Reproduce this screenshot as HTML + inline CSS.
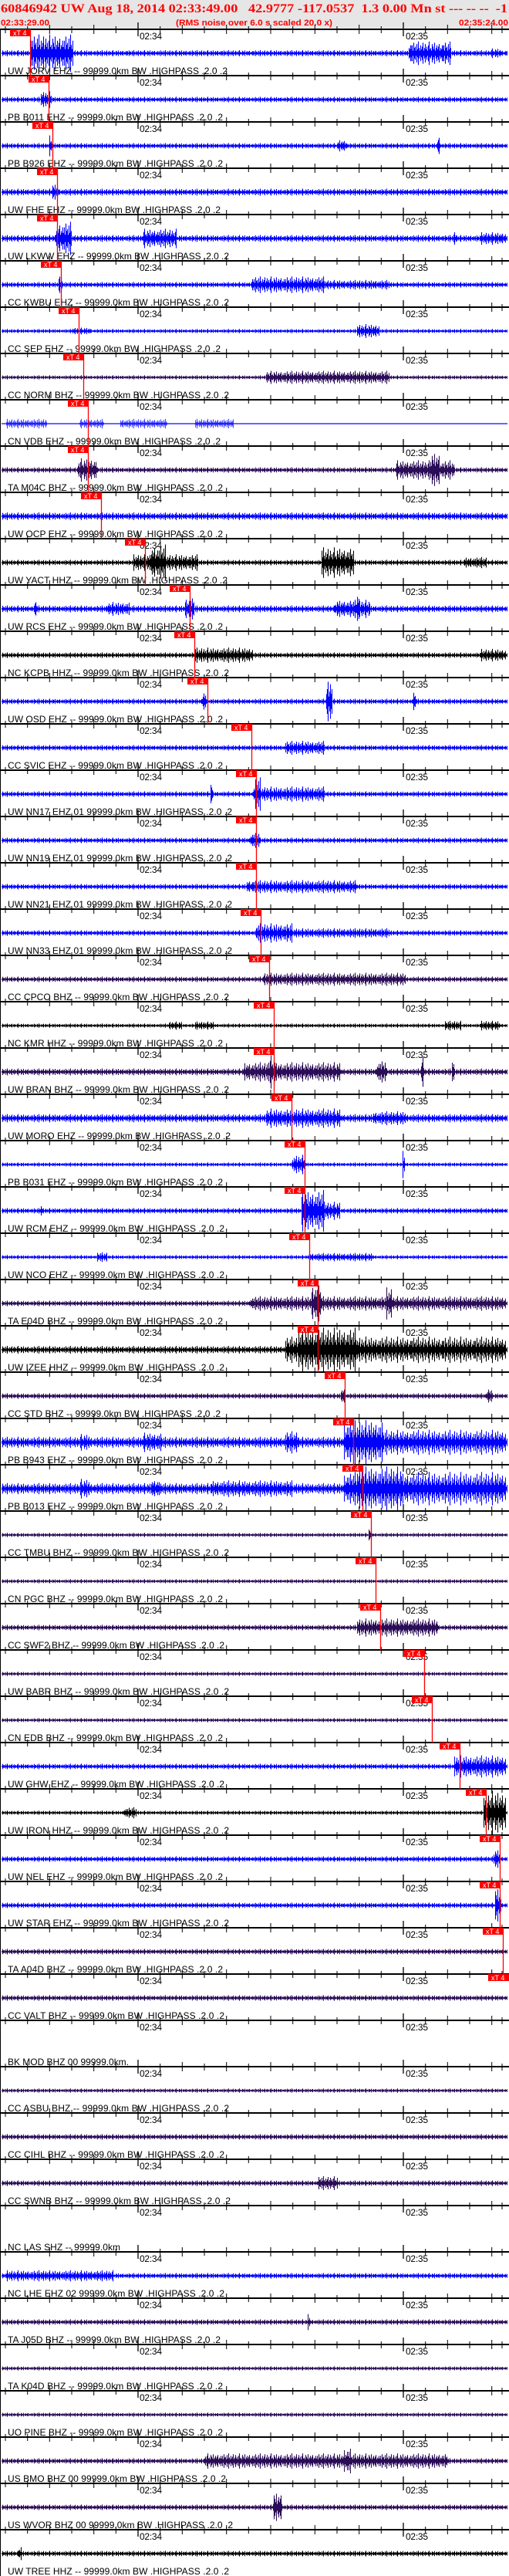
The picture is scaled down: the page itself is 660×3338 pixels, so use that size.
<!DOCTYPE html>
<html><head><meta charset="utf-8"><style>html,body{margin:0;padding:0;background:#fff}svg{display:block}</style></head>
<body>
<svg xmlns="http://www.w3.org/2000/svg" xmlns:xlink="http://www.w3.org/1999/xlink" width="660" height="3338" viewBox="0 0 660 3338" font-family="'Liberation Sans', sans-serif">
<defs>
<path id="tile" d="M0.5 7V13M1.5 4V16M2.5 8V12M3.5 2V18M4.5 6V14M5.5 5V15M6.5 8V12M7.5 3V17M8.5 7V13M9.5 1V19M10.5 6V14M11.5 8V12M12.5 4V16M13.5 7V13M14.5 5V15M15.5 2V18M16.5 8V12M17.5 6V14M18.5 3V17M19.5 7V13M20.5 5V15M21.5 8V12M22.5 4V16M23.5 1V19M24.5 7V13M25.5 6V14M26.5 8V12M27.5 3V17M28.5 5V15M29.5 7V13M30.5 2V18M31.5 8V12M32.5 6V14M33.5 4V16M34.5 7V13M35.5 5V15M36.5 3V17M37.5 8V12M38.5 6V14M39.5 7V13M40.5 4V16"/>
<pattern id="B" width="41" height="20" y="-10" patternUnits="userSpaceOnUse"><use xlink:href="#tile" stroke="#0000ff" stroke-width="1.1"/><path d="M0 10H41" stroke="#0000ff" stroke-width="3"/></pattern>
<pattern id="P" width="41" height="20" y="-10" patternUnits="userSpaceOnUse"><use xlink:href="#tile" stroke="#2a0c57" stroke-width="1.1"/><path d="M0 10H41" stroke="#2a0c57" stroke-width="3"/></pattern>
<pattern id="K" width="41" height="20" y="-10" patternUnits="userSpaceOnUse"><use xlink:href="#tile" stroke="#000000" stroke-width="1.1"/><path d="M0 10H41" stroke="#000" stroke-width="3"/></pattern>
<g id="ax">
<path d="M0 0H660" stroke="#000" stroke-width="2"/>
<path d="M7 -4V5M35.7 -4V5M64.3 -6V6M93 -4V5M121.7 -6V6M150.3 -4V5M207.7 -4V5M236.3 -6V6M265 -4V5M293.7 -6V6M322.3 -4V5M351 -6V6M379.7 -4V5M408.3 -6V6M437 -4V5M465.7 -6V6M494.3 -4V5M551.7 -4V5M580.3 -6V6M609 -4V5M637.7 -6V6M651 -4V5" stroke="#000" stroke-width="1"/>
<path d="M179 -9V9M523 -9V9" stroke="#000" stroke-width="1.3"/>
</g>
</defs>

<rect x="0" y="0" width="660" height="37" fill="#e6e6e6"/>
<text x="1" y="16" font-family="'Liberation Serif', serif" font-weight="bold" font-size="16" fill="#f00" textLength="657" lengthAdjust="spacingAndGlyphs" xml:space="preserve">60846942 UW Aug 18, 2014 02:33:49.00   42.9777 -117.0537  1.3 0.00 Mn st --- -- --  -1</text>
<text x="1" y="33" font-weight="bold" font-size="11" fill="#f00" textLength="63" lengthAdjust="spacingAndGlyphs">02:33:29.00</text>
<text x="228" y="33" font-weight="bold" font-size="11" fill="#f00" textLength="203" lengthAdjust="spacingAndGlyphs">(RMS noise over 6.0 s scaled 20.0 x)</text>
<text x="595" y="33" font-weight="bold" font-size="11" fill="#f00" textLength="64" lengthAdjust="spacingAndGlyphs">02:35:24.00</text>

<g>
<g transform="translate(0,69)"><rect x="2" y="-10" width="656" height="20" fill="url(#B)" transform="scale(1,0.45)"/><rect x="40" y="-10" width="55" height="20" fill="url(#B)" transform="scale(1,2.7)"/><rect x="530" y="-10" width="55" height="20" fill="url(#B)" transform="scale(1,1.7)"/><rect x="636" y="-10" width="14" height="20" fill="url(#B)" transform="scale(1,0.7)"/></g>
<g transform="translate(0,129)"><rect x="2" y="-10" width="656" height="20" fill="url(#B)" transform="scale(1,0.4)"/><rect x="53" y="-10" width="14" height="20" fill="url(#B)" transform="scale(1,1.2)"/></g>
<g transform="translate(0,189)"><rect x="2" y="-10" width="656" height="20" fill="url(#B)" transform="scale(1,0.4)"/><rect x="64" y="-10" width="5" height="20" fill="url(#B)" transform="scale(1,1.5)"/><rect x="438" y="-10" width="12" height="20" fill="url(#B)" transform="scale(1,0.9)"/><rect x="567" y="-10" width="4" height="20" fill="url(#B)" transform="scale(1,1.5)"/></g>
<g transform="translate(0,249)"><rect x="2" y="-10" width="656" height="20" fill="url(#B)" transform="scale(1,0.5)"/><rect x="67" y="-10" width="9" height="20" fill="url(#B)" transform="scale(1,1.2)"/></g>
<g transform="translate(0,309)"><rect x="2" y="-10" width="656" height="20" fill="url(#B)" transform="scale(1,0.5)"/><rect x="72" y="-10" width="21" height="20" fill="url(#B)" transform="scale(1,2.4)"/><rect x="185" y="-10" width="44" height="20" fill="url(#B)" transform="scale(1,1.4)"/><rect x="588" y="-10" width="4" height="20" fill="url(#B)" transform="scale(1,1)"/><rect x="623" y="-10" width="33" height="20" fill="url(#B)" transform="scale(1,0.9)"/></g>
<g transform="translate(0,369)"><rect x="2" y="-10" width="656" height="20" fill="url(#B)" transform="scale(1,0.4)"/><rect x="76" y="-10" width="5" height="20" fill="url(#B)" transform="scale(1,1.5)"/><rect x="326" y="-10" width="95" height="20" fill="url(#B)" transform="scale(1,1.2)"/><rect x="421" y="-10" width="84" height="20" fill="url(#B)" transform="scale(1,0.7)"/></g>
<g transform="translate(0,429)"><rect x="2" y="-10" width="656" height="20" fill="url(#B)" transform="scale(1,0.3)"/><rect x="93" y="-10" width="25" height="20" fill="url(#B)" transform="scale(1,0.5)"/><rect x="463" y="-10" width="29" height="20" fill="url(#B)" transform="scale(1,1)"/></g>
<g transform="translate(0,489)"><rect x="2" y="-10" width="656" height="20" fill="url(#P)" transform="scale(1,0.3)"/><rect x="345" y="-10" width="160" height="20" fill="url(#P)" transform="scale(1,0.95)"/></g>
<g transform="translate(0,549)"><rect x="2" y="-0.6" width="656" height="1.2" fill="#0000ff"/><rect x="8" y="-10" width="53" height="20" fill="url(#B)" transform="scale(1,0.7)" opacity="0.7"/><rect x="103" y="-10" width="32" height="20" fill="url(#B)" transform="scale(1,0.7)" opacity="0.7"/><rect x="156" y="-10" width="61" height="20" fill="url(#B)" transform="scale(1,0.7)" opacity="0.7"/><rect x="253" y="-10" width="50" height="20" fill="url(#B)" transform="scale(1,0.7)" opacity="0.7"/></g>
<g transform="translate(0,609)"><rect x="2" y="-10" width="656" height="20" fill="url(#P)" transform="scale(1,0.4)"/><rect x="101" y="-10" width="25" height="20" fill="url(#P)" transform="scale(1,1.7)"/><rect x="513" y="-10" width="76" height="20" fill="url(#P)" transform="scale(1,1.4)"/><rect x="558" y="-10" width="12" height="20" fill="url(#P)" transform="scale(1,2.6)"/></g>
<g transform="translate(0,669)"><rect x="2" y="-10" width="656" height="20" fill="url(#B)" transform="scale(1,0.55)"/></g>
<g transform="translate(0,729)"><rect x="2" y="-10" width="656" height="20" fill="url(#K)" transform="scale(1,0.4)"/><rect x="173" y="-10" width="84" height="20" fill="url(#K)" transform="scale(1,1.2)"/><rect x="195" y="-10" width="20" height="20" fill="url(#K)" transform="scale(1,2.6)"/><rect x="417" y="-10" width="42" height="20" fill="url(#K)" transform="scale(1,2.2)"/><rect x="602" y="-10" width="29" height="20" fill="url(#K)" transform="scale(1,0.8)"/></g>
<g transform="translate(0,789)"><rect x="2" y="-10" width="656" height="20" fill="url(#B)" transform="scale(1,0.5)"/><rect x="45" y="-10" width="3" height="20" fill="url(#B)" transform="scale(1,1.7)"/><rect x="139" y="-10" width="29" height="20" fill="url(#B)" transform="scale(1,1)"/><rect x="240" y="-10" width="12" height="20" fill="url(#B)" transform="scale(1,1.7)"/><rect x="434" y="-10" width="46" height="20" fill="url(#B)" transform="scale(1,1.3)"/><rect x="462" y="-10" width="4" height="20" fill="url(#B)" transform="scale(1,2.6)"/></g>
<g transform="translate(0,849)"><rect x="2" y="-10" width="656" height="20" fill="url(#K)" transform="scale(1,0.4)"/><rect x="252" y="-10" width="76" height="20" fill="url(#K)" transform="scale(1,1.1)"/><rect x="623" y="-10" width="33" height="20" fill="url(#K)" transform="scale(1,0.9)"/></g>
<g transform="translate(0,909)"><rect x="2" y="-10" width="656" height="20" fill="url(#B)" transform="scale(1,0.4)"/><rect x="262" y="-10" width="6" height="20" fill="url(#B)" transform="scale(1,1.5)"/><rect x="423" y="-10" width="8" height="20" fill="url(#B)" transform="scale(1,3.2)"/><rect x="535" y="-10" width="5" height="20" fill="url(#B)" transform="scale(1,1.4)"/></g>
<g transform="translate(0,969)"><rect x="2" y="-10" width="656" height="20" fill="url(#B)" transform="scale(1,0.4)"/><rect x="370" y="-10" width="51" height="20" fill="url(#B)" transform="scale(1,1)"/></g>
<g transform="translate(0,1029)"><rect x="2" y="-10" width="656" height="20" fill="url(#B)" transform="scale(1,0.4)"/><rect x="273" y="-10" width="3" height="20" fill="url(#B)" transform="scale(1,1.7)"/><rect x="328" y="-10" width="93" height="20" fill="url(#B)" transform="scale(1,1.1)"/><rect x="330" y="-10" width="8" height="20" fill="url(#B)" transform="scale(1,2.4)"/></g>
<g transform="translate(0,1089)"><rect x="2" y="-10" width="656" height="20" fill="url(#B)" transform="scale(1,0.4)"/><rect x="324" y="-10" width="13" height="20" fill="url(#B)" transform="scale(1,1.2)"/></g>
<g transform="translate(0,1149)"><rect x="2" y="-10" width="656" height="20" fill="url(#B)" transform="scale(1,0.4)"/><rect x="320" y="-10" width="143" height="20" fill="url(#B)" transform="scale(1,0.95)"/></g>
<g transform="translate(0,1209)"><rect x="2" y="-10" width="656" height="20" fill="url(#B)" transform="scale(1,0.4)"/><rect x="332" y="-10" width="47" height="20" fill="url(#B)" transform="scale(1,1.4)"/><rect x="379" y="-10" width="126" height="20" fill="url(#B)" transform="scale(1,0.7)"/></g>
<g transform="translate(0,1269)"><rect x="2" y="-10" width="656" height="20" fill="url(#P)" transform="scale(1,0.4)"/><rect x="341" y="-10" width="185" height="20" fill="url(#P)" transform="scale(1,0.95)"/></g>
<g transform="translate(0,1329)"><rect x="2" y="-10" width="656" height="20" fill="url(#K)" transform="scale(1,0.3)"/><rect x="219" y="-10" width="17" height="20" fill="url(#K)" transform="scale(1,0.6)"/><rect x="253" y="-10" width="25" height="20" fill="url(#K)" transform="scale(1,0.6)"/><rect x="577" y="-10" width="21" height="20" fill="url(#K)" transform="scale(1,0.7)"/><rect x="623" y="-10" width="25" height="20" fill="url(#K)" transform="scale(1,0.7)"/></g>
<g transform="translate(0,1389)"><rect x="2" y="-10" width="656" height="20" fill="url(#P)" transform="scale(1,0.5)"/><rect x="316" y="-10" width="126" height="20" fill="url(#P)" transform="scale(1,1.4)"/><rect x="348" y="-10" width="10" height="20" fill="url(#P)" transform="scale(1,2.4)"/><rect x="488" y="-10" width="13" height="20" fill="url(#P)" transform="scale(1,1.7)"/><rect x="546" y="-10" width="4" height="20" fill="url(#P)" transform="scale(1,2.4)"/><rect x="586" y="-10" width="3" height="20" fill="url(#P)" transform="scale(1,2)"/></g>
<g transform="translate(0,1449)"><rect x="2" y="-10" width="656" height="20" fill="url(#B)" transform="scale(1,0.6)"/><rect x="345" y="-10" width="97" height="20" fill="url(#B)" transform="scale(1,1.4)"/><rect x="484" y="-10" width="42" height="20" fill="url(#B)" transform="scale(1,1)"/></g>
<g transform="translate(0,1509)"><rect x="2" y="-10" width="656" height="20" fill="url(#B)" transform="scale(1,0.3)"/><rect x="379" y="-10" width="17" height="20" fill="url(#B)" transform="scale(1,1.4)"/><rect x="522" y="-10" width="3" height="20" fill="url(#B)" transform="scale(1,2.2)"/></g>
<g transform="translate(0,1569)"><rect x="2" y="-10" width="656" height="20" fill="url(#B)" transform="scale(1,0.4)"/><rect x="52" y="-10" width="3" height="20" fill="url(#B)" transform="scale(1,1)"/><rect x="391" y="-10" width="30" height="20" fill="url(#B)" transform="scale(1,3)"/><rect x="421" y="-10" width="20" height="20" fill="url(#B)" transform="scale(1,1.3)"/></g>
<g transform="translate(0,1629)"><rect x="2" y="-10" width="656" height="20" fill="url(#B)" transform="scale(1,0.3)"/><rect x="126" y="-10" width="13" height="20" fill="url(#B)" transform="scale(1,0.7)"/><rect x="400" y="-10" width="84" height="20" fill="url(#B)" transform="scale(1,0.6)"/></g>
<g transform="translate(0,1689)"><rect x="2" y="-10" width="656" height="20" fill="url(#P)" transform="scale(1,0.4)"/><rect x="324" y="-10" width="332" height="20" fill="url(#P)" transform="scale(1,1.05)"/><rect x="404" y="-10" width="13" height="20" fill="url(#P)" transform="scale(1,2.9)"/><rect x="501" y="-10" width="8" height="20" fill="url(#P)" transform="scale(1,2.3)"/></g>
<g transform="translate(0,1749)"><rect x="2" y="-10" width="656" height="20" fill="url(#K)" transform="scale(1,0.55)"/><rect x="370" y="-10" width="286" height="20" fill="url(#K)" transform="scale(1,1.9)"/><rect x="387" y="-10" width="76" height="20" fill="url(#K)" transform="scale(1,3.2)"/></g>
<g transform="translate(0,1809)"><rect x="2" y="-10" width="656" height="20" fill="url(#P)" transform="scale(1,0.4)"/><rect x="442" y="-10" width="6" height="20" fill="url(#P)" transform="scale(1,1.2)"/><rect x="631" y="-10" width="7" height="20" fill="url(#P)" transform="scale(1,1.2)"/></g>
<g transform="translate(0,1869)"><rect x="2" y="-10" width="656" height="20" fill="url(#B)" transform="scale(1,0.8)"/><rect x="104" y="-10" width="12" height="20" fill="url(#B)" transform="scale(1,1.2)"/><rect x="185" y="-10" width="25" height="20" fill="url(#B)" transform="scale(1,1.4)"/><rect x="370" y="-10" width="17" height="20" fill="url(#B)" transform="scale(1,1.6)"/><rect x="446" y="-10" width="210" height="20" fill="url(#B)" transform="scale(1,1.8)"/><rect x="446" y="-10" width="51" height="20" fill="url(#B)" transform="scale(1,3.2)"/></g>
<g transform="translate(0,1929)"><rect x="2" y="-10" width="656" height="20" fill="url(#B)" transform="scale(1,0.8)"/><rect x="104" y="-10" width="12" height="20" fill="url(#B)" transform="scale(1,1.4)"/><rect x="196" y="-10" width="12" height="20" fill="url(#B)" transform="scale(1,1.4)"/><rect x="274" y="-10" width="105" height="20" fill="url(#B)" transform="scale(1,1.2)"/><rect x="446" y="-10" width="210" height="20" fill="url(#B)" transform="scale(1,2.4)"/><rect x="463" y="-10" width="59" height="20" fill="url(#B)" transform="scale(1,3.2)"/></g>
<g transform="translate(0,1989)"><rect x="2" y="-10" width="656" height="20" fill="url(#P)" transform="scale(1,0.3)"/><rect x="478" y="-10" width="5" height="20" fill="url(#P)" transform="scale(1,1)"/></g>
<g transform="translate(0,2049)"><rect x="2" y="-10" width="656" height="20" fill="url(#P)" transform="scale(1,0.3)"/></g>
<g transform="translate(0,2109)"><rect x="2" y="-10" width="656" height="20" fill="url(#P)" transform="scale(1,0.4)"/><rect x="463" y="-10" width="105" height="20" fill="url(#P)" transform="scale(1,1.3)"/></g>
<g transform="translate(0,2169)"><rect x="2" y="-10" width="656" height="20" fill="url(#P)" transform="scale(1,0.3)"/></g>
<g transform="translate(0,2229)"><rect x="2" y="-10" width="656" height="20" fill="url(#P)" transform="scale(1,0.3)"/></g>
<g transform="translate(0,2289)"><rect x="2" y="-10" width="656" height="20" fill="url(#B)" transform="scale(1,0.4)"/><rect x="589" y="-10" width="67" height="20" fill="url(#B)" transform="scale(1,1.6)"/></g>
<g transform="translate(0,2349)"><rect x="2" y="-10" width="656" height="20" fill="url(#K)" transform="scale(1,0.3)"/><rect x="160" y="-10" width="17" height="20" fill="url(#K)" transform="scale(1,0.8)"/><rect x="627" y="-10" width="29" height="20" fill="url(#K)" transform="scale(1,3.2)"/></g>
<g transform="translate(0,2409)"><rect x="2" y="-10" width="656" height="20" fill="url(#B)" transform="scale(1,0.4)"/><rect x="640" y="-10" width="8" height="20" fill="url(#B)" transform="scale(1,1.4)"/></g>
<g transform="translate(0,2469)"><rect x="2" y="-10" width="656" height="20" fill="url(#B)" transform="scale(1,0.4)"/><rect x="642" y="-10" width="8" height="20" fill="url(#B)" transform="scale(1,2.6)"/></g>
<g transform="translate(0,2529)"><rect x="2" y="-10" width="656" height="20" fill="url(#P)" transform="scale(1,0.4)"/></g>
<g transform="translate(0,2589)"><rect x="2" y="-10" width="656" height="20" fill="url(#P)" transform="scale(1,0.4)"/></g>
<g transform="translate(0,2709)"><rect x="2" y="-10" width="656" height="20" fill="url(#P)" transform="scale(1,0.3)"/></g>
<g transform="translate(0,2769)"><rect x="2" y="-10" width="656" height="20" fill="url(#P)" transform="scale(1,0.4)"/></g>
<g transform="translate(0,2829)"><rect x="2" y="-10" width="656" height="20" fill="url(#P)" transform="scale(1,0.4)"/><rect x="412" y="-10" width="26" height="20" fill="url(#P)" transform="scale(1,1)"/></g>
<g transform="translate(0,2949)"><rect x="2" y="-10" width="656" height="20" fill="url(#B)" transform="scale(1,0.4)"/><rect x="8" y="-10" width="139" height="20" fill="url(#B)" transform="scale(1,0.8)"/></g>
<g transform="translate(0,3009)"><rect x="2" y="-10" width="656" height="20" fill="url(#P)" transform="scale(1,0.4)"/><rect x="399" y="-10" width="3" height="20" fill="url(#P)" transform="scale(1,1.3)"/></g>
<g transform="translate(0,3069)"><rect x="2" y="-10" width="656" height="20" fill="url(#P)" transform="scale(1,0.3)"/></g>
<g transform="translate(0,3129)"><rect x="2" y="-10" width="656" height="20" fill="url(#P)" transform="scale(1,0.3)"/></g>
<g transform="translate(0,3189)"><rect x="2" y="-10" width="656" height="20" fill="url(#P)" transform="scale(1,0.4)"/><rect x="265" y="-10" width="316" height="20" fill="url(#P)" transform="scale(1,1.1)"/><rect x="446" y="-10" width="9" height="20" fill="url(#P)" transform="scale(1,2)"/></g>
<g transform="translate(0,3249)"><rect x="2" y="-10" width="656" height="20" fill="url(#P)" transform="scale(1,0.4)"/><rect x="354" y="-10" width="12" height="20" fill="url(#P)" transform="scale(1,2.2)"/></g>
<g transform="translate(0,3309)"><rect x="2" y="-10" width="656" height="20" fill="url(#K)" transform="scale(1,0.4)"/><rect x="24" y="-10" width="4" height="20" fill="url(#K)" transform="scale(1,1.2)"/></g>
</g>

<path d="M0.5 38V3338" stroke="#000" stroke-width="1"/>

<g>
<use xlink:href="#ax" y="38"/><use xlink:href="#ax" y="98"/><use xlink:href="#ax" y="158"/><use xlink:href="#ax" y="218"/><use xlink:href="#ax" y="278"/>
<use xlink:href="#ax" y="338"/><use xlink:href="#ax" y="398"/><use xlink:href="#ax" y="458"/><use xlink:href="#ax" y="518"/><use xlink:href="#ax" y="578"/>
<use xlink:href="#ax" y="638"/><use xlink:href="#ax" y="698"/><use xlink:href="#ax" y="758"/><use xlink:href="#ax" y="818"/><use xlink:href="#ax" y="878"/>
<use xlink:href="#ax" y="938"/><use xlink:href="#ax" y="998"/><use xlink:href="#ax" y="1058"/><use xlink:href="#ax" y="1118"/><use xlink:href="#ax" y="1178"/>
<use xlink:href="#ax" y="1238"/><use xlink:href="#ax" y="1298"/><use xlink:href="#ax" y="1358"/><use xlink:href="#ax" y="1418"/><use xlink:href="#ax" y="1478"/>
<use xlink:href="#ax" y="1538"/><use xlink:href="#ax" y="1598"/><use xlink:href="#ax" y="1658"/><use xlink:href="#ax" y="1718"/><use xlink:href="#ax" y="1778"/>
<use xlink:href="#ax" y="1838"/><use xlink:href="#ax" y="1898"/><use xlink:href="#ax" y="1958"/><use xlink:href="#ax" y="2018"/><use xlink:href="#ax" y="2078"/>
<use xlink:href="#ax" y="2138"/><use xlink:href="#ax" y="2198"/><use xlink:href="#ax" y="2258"/><use xlink:href="#ax" y="2318"/><use xlink:href="#ax" y="2378"/>
<use xlink:href="#ax" y="2438"/><use xlink:href="#ax" y="2498"/><use xlink:href="#ax" y="2558"/><use xlink:href="#ax" y="2618"/><use xlink:href="#ax" y="2678"/>
<use xlink:href="#ax" y="2738"/><use xlink:href="#ax" y="2798"/><use xlink:href="#ax" y="2858"/><use xlink:href="#ax" y="2918"/><use xlink:href="#ax" y="2978"/>
<use xlink:href="#ax" y="3038"/><use xlink:href="#ax" y="3098"/><use xlink:href="#ax" y="3158"/><use xlink:href="#ax" y="3218"/><use xlink:href="#ax" y="3278"/>
</g>

<g font-size="12" fill="#000">
<text x="181" y="51" textLength="29">02:34</text><text x="526" y="51" textLength="29">02:35</text>
<text x="181" y="111" textLength="29">02:34</text><text x="526" y="111" textLength="29">02:35</text>
<text x="181" y="171" textLength="29">02:34</text><text x="526" y="171" textLength="29">02:35</text>
<text x="181" y="231" textLength="29">02:34</text><text x="526" y="231" textLength="29">02:35</text>
<text x="181" y="291" textLength="29">02:34</text><text x="526" y="291" textLength="29">02:35</text>
<text x="181" y="351" textLength="29">02:34</text><text x="526" y="351" textLength="29">02:35</text>
<text x="181" y="411" textLength="29">02:34</text><text x="526" y="411" textLength="29">02:35</text>
<text x="181" y="471" textLength="29">02:34</text><text x="526" y="471" textLength="29">02:35</text>
<text x="181" y="531" textLength="29">02:34</text><text x="526" y="531" textLength="29">02:35</text>
<text x="181" y="591" textLength="29">02:34</text><text x="526" y="591" textLength="29">02:35</text>
<text x="181" y="651" textLength="29">02:34</text><text x="526" y="651" textLength="29">02:35</text>
<text x="181" y="711" textLength="29">02:34</text><text x="526" y="711" textLength="29">02:35</text>
<text x="181" y="771" textLength="29">02:34</text><text x="526" y="771" textLength="29">02:35</text>
<text x="181" y="831" textLength="29">02:34</text><text x="526" y="831" textLength="29">02:35</text>
<text x="181" y="891" textLength="29">02:34</text><text x="526" y="891" textLength="29">02:35</text>
<text x="181" y="951" textLength="29">02:34</text><text x="526" y="951" textLength="29">02:35</text>
<text x="181" y="1011" textLength="29">02:34</text><text x="526" y="1011" textLength="29">02:35</text>
<text x="181" y="1071" textLength="29">02:34</text><text x="526" y="1071" textLength="29">02:35</text>
<text x="181" y="1131" textLength="29">02:34</text><text x="526" y="1131" textLength="29">02:35</text>
<text x="181" y="1191" textLength="29">02:34</text><text x="526" y="1191" textLength="29">02:35</text>
<text x="181" y="1251" textLength="29">02:34</text><text x="526" y="1251" textLength="29">02:35</text>
<text x="181" y="1311" textLength="29">02:34</text><text x="526" y="1311" textLength="29">02:35</text>
<text x="181" y="1371" textLength="29">02:34</text><text x="526" y="1371" textLength="29">02:35</text>
<text x="181" y="1431" textLength="29">02:34</text><text x="526" y="1431" textLength="29">02:35</text>
<text x="181" y="1491" textLength="29">02:34</text><text x="526" y="1491" textLength="29">02:35</text>
<text x="181" y="1551" textLength="29">02:34</text><text x="526" y="1551" textLength="29">02:35</text>
<text x="181" y="1611" textLength="29">02:34</text><text x="526" y="1611" textLength="29">02:35</text>
<text x="181" y="1671" textLength="29">02:34</text><text x="526" y="1671" textLength="29">02:35</text>
<text x="181" y="1731" textLength="29">02:34</text><text x="526" y="1731" textLength="29">02:35</text>
<text x="181" y="1791" textLength="29">02:34</text><text x="526" y="1791" textLength="29">02:35</text>
<text x="181" y="1851" textLength="29">02:34</text><text x="526" y="1851" textLength="29">02:35</text>
<text x="181" y="1911" textLength="29">02:34</text><text x="526" y="1911" textLength="29">02:35</text>
<text x="181" y="1971" textLength="29">02:34</text><text x="526" y="1971" textLength="29">02:35</text>
<text x="181" y="2031" textLength="29">02:34</text><text x="526" y="2031" textLength="29">02:35</text>
<text x="181" y="2091" textLength="29">02:34</text><text x="526" y="2091" textLength="29">02:35</text>
<text x="181" y="2151" textLength="29">02:34</text><text x="526" y="2151" textLength="29">02:35</text>
<text x="181" y="2211" textLength="29">02:34</text><text x="526" y="2211" textLength="29">02:35</text>
<text x="181" y="2271" textLength="29">02:34</text><text x="526" y="2271" textLength="29">02:35</text>
<text x="181" y="2331" textLength="29">02:34</text><text x="526" y="2331" textLength="29">02:35</text>
<text x="181" y="2391" textLength="29">02:34</text><text x="526" y="2391" textLength="29">02:35</text>
<text x="181" y="2451" textLength="29">02:34</text><text x="526" y="2451" textLength="29">02:35</text>
<text x="181" y="2511" textLength="29">02:34</text><text x="526" y="2511" textLength="29">02:35</text>
<text x="181" y="2571" textLength="29">02:34</text><text x="526" y="2571" textLength="29">02:35</text>
<text x="181" y="2631" textLength="29">02:34</text><text x="526" y="2631" textLength="29">02:35</text>
<text x="181" y="2691" textLength="29">02:34</text><text x="526" y="2691" textLength="29">02:35</text>
<text x="181" y="2751" textLength="29">02:34</text><text x="526" y="2751" textLength="29">02:35</text>
<text x="181" y="2811" textLength="29">02:34</text><text x="526" y="2811" textLength="29">02:35</text>
<text x="181" y="2871" textLength="29">02:34</text><text x="526" y="2871" textLength="29">02:35</text>
<text x="181" y="2931" textLength="29">02:34</text><text x="526" y="2931" textLength="29">02:35</text>
<text x="181" y="2991" textLength="29">02:34</text><text x="526" y="2991" textLength="29">02:35</text>
<text x="181" y="3051" textLength="29">02:34</text><text x="526" y="3051" textLength="29">02:35</text>
<text x="181" y="3111" textLength="29">02:34</text><text x="526" y="3111" textLength="29">02:35</text>
<text x="181" y="3171" textLength="29">02:34</text><text x="526" y="3171" textLength="29">02:35</text>
<text x="181" y="3231" textLength="29">02:34</text><text x="526" y="3231" textLength="29">02:35</text>
<text x="181" y="3291" textLength="29">02:34</text><text x="526" y="3291" textLength="29">02:35</text>
</g>

<g font-size="12" fill="#000" lengthAdjust="spacingAndGlyphs">
<text x="10" y="96" textLength="285">UW JORV EHZ -- 99999.0km BW .HIGHPASS .2.0 .2</text>
<text x="10" y="156" textLength="279">PB B011 EHZ -- 99999.0km BW .HIGHPASS .2.0 .2</text>
<text x="10" y="216" textLength="279">PB B926 EHZ -- 99999.0km BW .HIGHPASS .2.0 .2</text>
<text x="10" y="276" textLength="276">UW FHE EHZ -- 99999.0km BW .HIGHPASS .2.0 .2</text>
<text x="10" y="336" textLength="287">UW LKWW EHZ -- 99999.0km BW .HIGHPASS .2.0 .2</text>
<text x="10" y="396" textLength="287">CC KWBU EHZ -- 99999.0km BW .HIGHPASS .2.0 .2</text>
<text x="10" y="456" textLength="276">CC SEP EHZ -- 99999.0km BW .HIGHPASS .2.0 .2</text>
<text x="10" y="516" textLength="287">CC NORM BHZ -- 99999.0km BW .HIGHPASS .2.0 .2</text>
<text x="10" y="576" textLength="276">CN VDB EHZ -- 99999.0km BW .HIGHPASS .2.0 .2</text>
<text x="10" y="636" textLength="279">TA M04C BHZ -- 99999.0km BW .HIGHPASS .2.0 .2</text>
<text x="10" y="696" textLength="279">UW OCP EHZ -- 99999.0km BW .HIGHPASS .2.0 .2</text>
<text x="10" y="756" textLength="285">UW YACT HHZ -- 99999.0km BW .HIGHPASS .2.0 .2</text>
<text x="10" y="816" textLength="279">UW RCS EHZ -- 99999.0km BW .HIGHPASS .2.0 .2</text>
<text x="10" y="876" textLength="287">NC KCPB HHZ -- 99999.0km BW .HIGHPASS .2.0 .2</text>
<text x="10" y="936" textLength="279">UW OSD EHZ -- 99999.0km BW .HIGHPASS .2.0 .2</text>
<text x="10" y="996" textLength="279">CC SVIC EHZ -- 99999.0km BW .HIGHPASS .2.0 .2</text>
<text x="10" y="1056" textLength="291">UW NN17 EHZ 01 99999.0km BW .HIGHPASS .2.0 .2</text>
<text x="10" y="1116" textLength="291">UW NN19 EHZ 01 99999.0km BW .HIGHPASS .2.0 .2</text>
<text x="10" y="1176" textLength="291">UW NN21 EHZ 01 99999.0km BW .HIGHPASS .2.0 .2</text>
<text x="10" y="1236" textLength="291">UW NN33 EHZ 01 99999.0km BW .HIGHPASS .2.0 .2</text>
<text x="10" y="1296" textLength="287">CC CPCO BHZ -- 99999.0km BW .HIGHPASS .2.0 .2</text>
<text x="10" y="1356" textLength="279">NC KMR HHZ -- 99999.0km BW .HIGHPASS .2.0 .2</text>
<text x="10" y="1416" textLength="287">UW BRAN BHZ -- 99999.0km BW .HIGHPASS .2.0 .2</text>
<text x="10" y="1476" textLength="289">UW MORO EHZ -- 99999.0km BW .HIGHPASS .2.0 .2</text>
<text x="10" y="1536" textLength="279">PB B031 EHZ -- 99999.0km BW .HIGHPASS .2.0 .2</text>
<text x="10" y="1596" textLength="281">UW RCM EHZ -- 99999.0km BW .HIGHPASS .2.0 .2</text>
<text x="10" y="1656" textLength="281">UW NCO EHZ -- 99999.0km BW .HIGHPASS .2.0 .2</text>
<text x="10" y="1716" textLength="279">TA E04D BHZ -- 99999.0km BW .HIGHPASS .2.0 .2</text>
<text x="10" y="1776" textLength="281">UW IZEE HHZ -- 99999.0km BW .HIGHPASS .2.0 .2</text>
<text x="10" y="1836" textLength="276">CC STD BHZ -- 99999.0km BW .HIGHPASS .2.0 .2</text>
<text x="10" y="1896" textLength="279">PB B943 EHZ -- 99999.0km BW .HIGHPASS .2.0 .2</text>
<text x="10" y="1956" textLength="279">PB B013 EHZ -- 99999.0km BW .HIGHPASS .2.0 .2</text>
<text x="10" y="2016" textLength="287">CC TMBU BHZ -- 99999.0km BW .HIGHPASS .2.0 .2</text>
<text x="10" y="2076" textLength="279">CN PGC BHZ -- 99999.0km BW .HIGHPASS .2.0 .2</text>
<text x="10" y="2136" textLength="281">CC SWF2 BHZ -- 99999.0km BW .HIGHPASS .2.0 .2</text>
<text x="10" y="2196" textLength="287">UW BABR BHZ -- 99999.0km BW .HIGHPASS .2.0 .2</text>
<text x="10" y="2256" textLength="279">CN EDB BHZ -- 99999.0km BW .HIGHPASS .2.0 .2</text>
<text x="10" y="2316" textLength="281">UW GHW EHZ -- 99999.0km BW .HIGHPASS .2.0 .2</text>
<text x="10" y="2376" textLength="287">UW IRON HHZ -- 99999.0km BW .HIGHPASS .2.0 .2</text>
<text x="10" y="2436" textLength="279">UW NEL EHZ -- 99999.0km BW .HIGHPASS .2.0 .2</text>
<text x="10" y="2496" textLength="287">UW STAR EHZ -- 99999.0km BW .HIGHPASS .2.0 .2</text>
<text x="10" y="2556" textLength="279">TA A04D BHZ -- 99999.0km BW .HIGHPASS .2.0 .2</text>
<text x="10" y="2616" textLength="281">CC VALT BHZ -- 99999.0km BW .HIGHPASS .2.0 .2</text>
<text x="10" y="2676" textLength="157">BK MOD BHZ 00 99999.0km.</text>
<text x="10" y="2736" textLength="287">CC ASBU BHZ -- 99999.0km BW .HIGHPASS .2.0 .2</text>
<text x="10" y="2796" textLength="281">CC CIHL BHZ -- 99999.0km BW .HIGHPASS .2.0 .2</text>
<text x="10" y="2856" textLength="289">CC SWNB BHZ -- 99999.0km BW .HIGHPASS .2.0 .2</text>
<text x="10" y="2916" textLength="146">NC LAS SHZ -- 99999.0km</text>
<text x="10" y="2976" textLength="281">NC LHE EHZ 02 99999.0km BW .HIGHPASS .2.0 .2</text>
<text x="10" y="3036" textLength="276">TA J05D BHZ -- 99999.0km BW .HIGHPASS .2.0 .2</text>
<text x="10" y="3096" textLength="279">TA K04D BHZ -- 99999.0km BW .HIGHPASS .2.0 .2</text>
<text x="10" y="3156" textLength="279">UO PINE BHZ -- 99999.0km BW .HIGHPASS .2.0 .2</text>
<text x="10" y="3216" textLength="283">US BMO BHZ 00 99999.0km BW .HIGHPASS .2.0 .2</text>
<text x="10" y="3276" textLength="292">US WVOR BHZ 00 99999.0km BW .HIGHPASS .2.0 .2</text>
<text x="10" y="3336" textLength="287">UW TREE HHZ -- 99999.0km BW .HIGHPASS .2.0 .2</text>
</g>

<g fill="#f00" stroke="none">
<rect x="13" y="38" width="27" height="9"/><rect x="37" y="98" width="27" height="9"/><rect x="42" y="158" width="27" height="9"/><rect x="48" y="218" width="27" height="9"/><rect x="48" y="278" width="27" height="9"/>
<rect x="53" y="338" width="27" height="9"/><rect x="76" y="398" width="27" height="9"/><rect x="82" y="458" width="27" height="9"/><rect x="88" y="518" width="27" height="9"/><rect x="88" y="578" width="27" height="9"/>
<rect x="105" y="638" width="27" height="9"/><rect x="162" y="698" width="27" height="9"/><rect x="220" y="758" width="27" height="9"/><rect x="226" y="818" width="27" height="9"/><rect x="243" y="878" width="27" height="9"/>
<rect x="300" y="938" width="27" height="9"/><rect x="306" y="998" width="27" height="9"/><rect x="306" y="1058" width="27" height="9"/><rect x="306" y="1118" width="27" height="9"/><rect x="312" y="1178" width="27" height="9"/>
<rect x="323" y="1238" width="27" height="9"/><rect x="329" y="1298" width="27" height="9"/><rect x="329" y="1358" width="27" height="9"/><rect x="352" y="1418" width="27" height="9"/><rect x="369" y="1478" width="27" height="9"/>
<rect x="369" y="1538" width="27" height="9"/><rect x="375" y="1598" width="27" height="9"/><rect x="386" y="1658" width="27" height="9"/><rect x="386" y="1718" width="27" height="9"/><rect x="421" y="1778" width="27" height="9"/>
<rect x="432" y="1838" width="27" height="9"/><rect x="444" y="1898" width="27" height="9"/><rect x="455" y="1958" width="27" height="9"/><rect x="461" y="2018" width="27" height="9"/><rect x="467" y="2078" width="27" height="9"/>
<rect x="524" y="2138" width="27" height="9"/><rect x="534" y="2198" width="27" height="9"/><rect x="570" y="2258" width="27" height="9"/><rect x="604" y="2318" width="27" height="9"/><rect x="622" y="2378" width="27" height="9"/>
<rect x="622" y="2438" width="27" height="9"/><rect x="626" y="2498" width="27" height="9"/><rect x="633" y="2558" width="27" height="9"/>
</g>
<path fill="none" stroke="#f00" stroke-width="1.3" d="M39.5 38V98M63.5 98V158M68.5 158V218M74.5 218V278M74.5 278V338M79.5 338V398M102.5 398V458M108.5 458V518M114.5 518V578M114.5 578V638M131.5 638V698M188.5 698V758M246.5 758V818M252.5 818V878M269.5 878V938M326.5 938V998M332.5 998V1058M332.5 1058V1118M332.5 1118V1178M338.5 1178V1238M349.5 1238V1298M355.5 1298V1358M355.5 1358V1418M378.5 1418V1478M395.5 1478V1538M395.5 1538V1598M401.5 1598V1658M412.5 1658V1718M412.5 1718V1778M447.5 1778V1838M458.5 1838V1898M470.5 1898V1958M481.5 1958V2018M487.5 2018V2078M493.5 2078V2138M550.5 2138V2198M560.5 2198V2258M596.5 2258V2318M630.5 2318V2378M648.5 2378V2438M648.5 2438V2498M652.5 2498V2558"/>
<g font-size="9" fill="#fff">
<text x="17" y="46">xT 4</text><text x="41" y="106">xT 4</text><text x="46" y="166">xT 4</text><text x="52" y="226">xT 4</text><text x="52" y="286">xT 4</text>
<text x="57" y="346">xT 4</text><text x="80" y="406">xT 4</text><text x="86" y="466">xT 4</text><text x="92" y="526">xT 4</text><text x="92" y="586">xT 4</text>
<text x="109" y="646">xT 4</text><text x="166" y="706">xT 4</text><text x="224" y="766">xT 4</text><text x="230" y="826">xT 4</text><text x="247" y="886">xT 4</text>
<text x="304" y="946">xT 4</text><text x="310" y="1006">xT 4</text><text x="310" y="1066">xT 4</text><text x="310" y="1126">xT 4</text><text x="316" y="1186">xT 4</text>
<text x="327" y="1246">xT 4</text><text x="333" y="1306">xT 4</text><text x="333" y="1366">xT 4</text><text x="356" y="1426">xT 4</text><text x="373" y="1486">xT 4</text>
<text x="373" y="1546">xT 4</text><text x="379" y="1606">xT 4</text><text x="390" y="1666">xT 4</text><text x="390" y="1726">xT 4</text><text x="425" y="1786">xT 4</text>
<text x="436" y="1846">xT 4</text><text x="448" y="1906">xT 4</text><text x="459" y="1966">xT 4</text><text x="465" y="2026">xT 4</text><text x="471" y="2086">xT 4</text>
<text x="528" y="2146">xT 4</text><text x="538" y="2206">xT 4</text><text x="574" y="2266">xT 4</text><text x="608" y="2326">xT 4</text><text x="626" y="2386">xT 4</text>
<text x="626" y="2446">xT 4</text><text x="630" y="2506">xT 4</text><text x="637" y="2566">xT 4</text>
</g>
</svg>
</body></html>
